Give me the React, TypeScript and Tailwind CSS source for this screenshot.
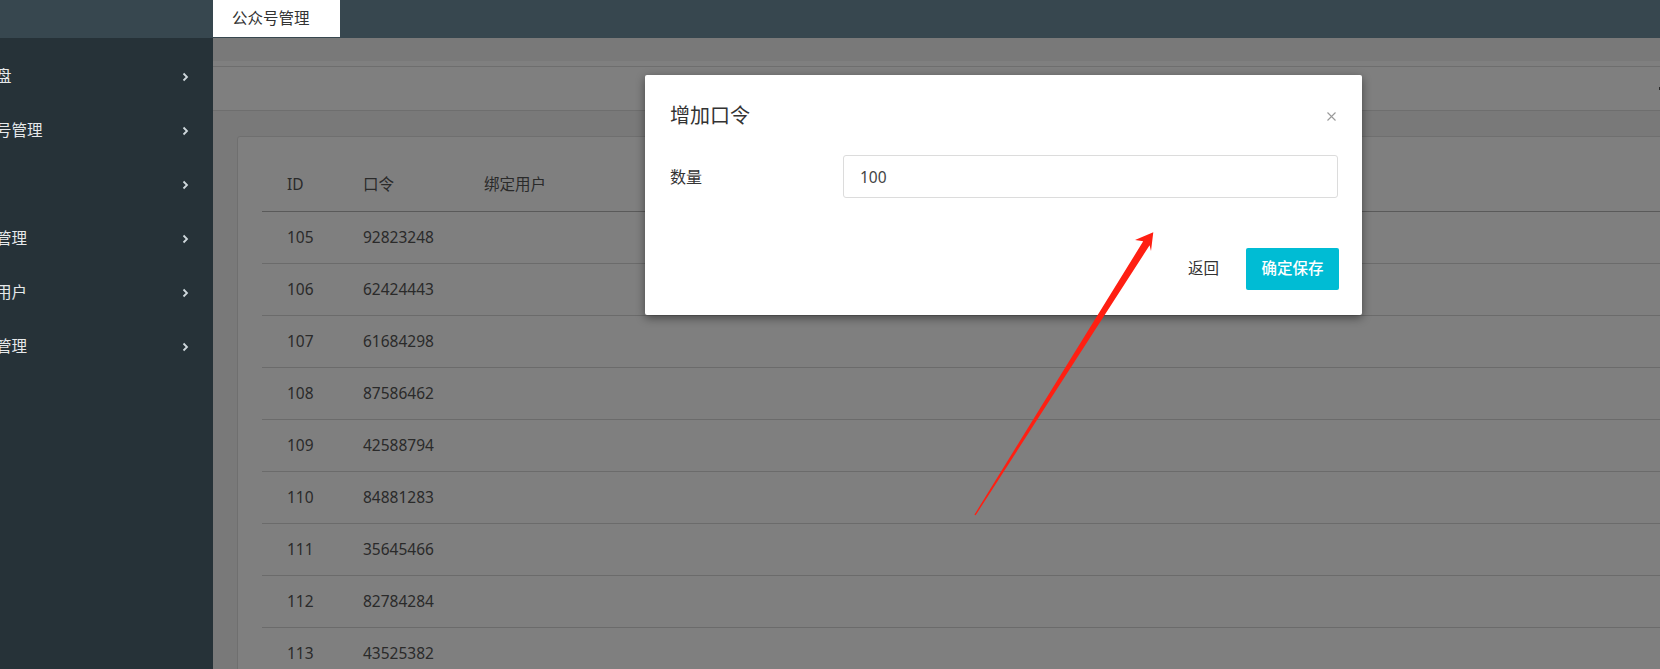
import React from 'react';

const menu = ['仪表盘', '公众号管理', '口令', '文章管理', '绑定用户', '系统管理'];

const rows = [
  ['105', '92823248'],
  ['106', '62424443'],
  ['107', '61684298'],
  ['108', '87586462'],
  ['109', '42588794'],
  ['110', '84881283'],
  ['111', '35645466'],
  ['112', '82784284'],
  ['113', '43525382'],
];

function Chevron() {
  return (
    <svg width="7" height="10" viewBox="0 0 7 10" className="text-[#cfd8dc]">
      <polyline points="1.5,1.5 5,5 1.5,8.5" fill="none" stroke="currentColor" strokeWidth="1.8" />
    </svg>
  );
}

function Sidebar() {
  return (
    <aside className="w-[213px] shrink-0 flex flex-col">
      <div className="h-[38px] bg-[#37474f]" />
      <nav className="flex-1 bg-[#263238] pt-[12px] overflow-hidden">
        {menu.map((m) => (
          <div key={m} className="h-[54px] flex items-center">
            <span className="-ml-[35px] flex-1 whitespace-nowrap text-[15.5px] text-[#e6e9eb]">{m}</span>
            <span className="mr-[24px] flex">
              <Chevron />
            </span>
          </div>
        ))}
      </nav>
    </aside>
  );
}

function TokenTable() {
  return (
    <div className="w-[1500px] bg-white border border-[#dedede] rounded-[3px] pt-[22px] pl-[24px] text-[15.5px] text-[#555]">
      <div className="h-[53px] flex items-center border-b border-[#b4b4b4]">
        <div className="w-[76px] pl-[25px]">ID</div>
        <div className="w-[121px] pl-[25px]">口令</div>
        <div className="pl-[25px]">绑定用户</div>
      </div>
      {rows.map(([id, code]) => (
        <div key={id} className="h-[52px] flex items-center border-b border-[#d6d6d6]">
          <div className="w-[76px] pl-[25px]">{id}</div>
          <div className="w-[121px] pl-[25px]">{code}</div>
          <div className="pl-[25px]" />
        </div>
      ))}
    </div>
  );
}

function AddTokenDialog() {
  return (
    <div className="absolute left-[645px] top-[75px] w-[717px] bg-white rounded-[2px] shadow-[0_3px_10px_rgba(0,0,0,0.45)] pt-[27px] pb-[25px]">
      <div className="h-[28px] pl-[25px] pr-[25px] flex items-center justify-between">
        <h3 className="text-[20px] text-[#333] leading-[28px]">增加口令</h3>
        <svg width="9" height="9" viewBox="0 0 9 9" className="mr-[1px]">
          <path d="M0.5 0.5 L8.5 8.5 M8.5 0.5 L0.5 8.5" stroke="#9a9a9a" strokeWidth="1.1" />
        </svg>
      </div>
      <div className="mt-[25px] pl-[25px] pr-[24px] flex items-center">
        <label className="w-[173px] text-[16px] text-[#333]">数量</label>
        <input
          readOnly
          value="100"
          className="w-[495px] h-[43px] border border-[#dcdcdc] rounded-[3px] pl-[16px] text-[15.5px] text-[#444] outline-none"
        />
      </div>
      <div className="mt-[50px] pr-[23px] flex items-center justify-end">
        <button className="mr-[27px] text-[15.5px] text-[#333]">返回</button>
        <button className="w-[93px] h-[42px] rounded-[2px] bg-[#00bcd4] text-white text-[15.5px] font-medium">
          确定保存
        </button>
      </div>
    </div>
  );
}

export default function App() {
  return (
    <div className="relative w-[1660px] h-[669px] overflow-hidden flex font-['Noto_Sans','Noto_Sans_CJK_SC',sans-serif]">
      <Sidebar />
      <main className="flex-1 flex flex-col min-w-0">
        <header className="h-[38px] shrink-0 bg-[#37474f] flex">
          <div className="w-[127px] h-[37px] bg-white pl-[19px] text-[15.5px] leading-[37px] text-[#333] whitespace-nowrap">
            公众号管理
          </div>
        </header>
        <section className="relative flex-1 overflow-hidden bg-[#f3f3f3]">
          <div className="h-[23px] bg-[#f3f3f3]" />
          <div className="h-[6px] bg-white border-b border-[#dcdcdc]" />
          <div className="h-[44px] bg-white border-b border-[#dcdcdc] flex items-center justify-end">
            <div className="w-[1px] h-[3px] bg-[#555]" />
          </div>
          <div className="pl-[24px] pt-[25px]">
            <TokenTable />
          </div>
          <div className="absolute inset-0 bg-black/50" />
        </section>
      </main>
      <AddTokenDialog />
      {/* red annotation arrow */}
      <svg className="absolute left-0 top-0 pointer-events-none" width="1660" height="669" viewBox="0 0 1660 669">
        <polygon
          fill="#ff1f12"
          points="1153.3,232.3 1151,251 1149.6,245.3 975.6,515.3 974.4,514.7 1143.2,241.3 1135,240"
        />
      </svg>
    </div>
  );
}
